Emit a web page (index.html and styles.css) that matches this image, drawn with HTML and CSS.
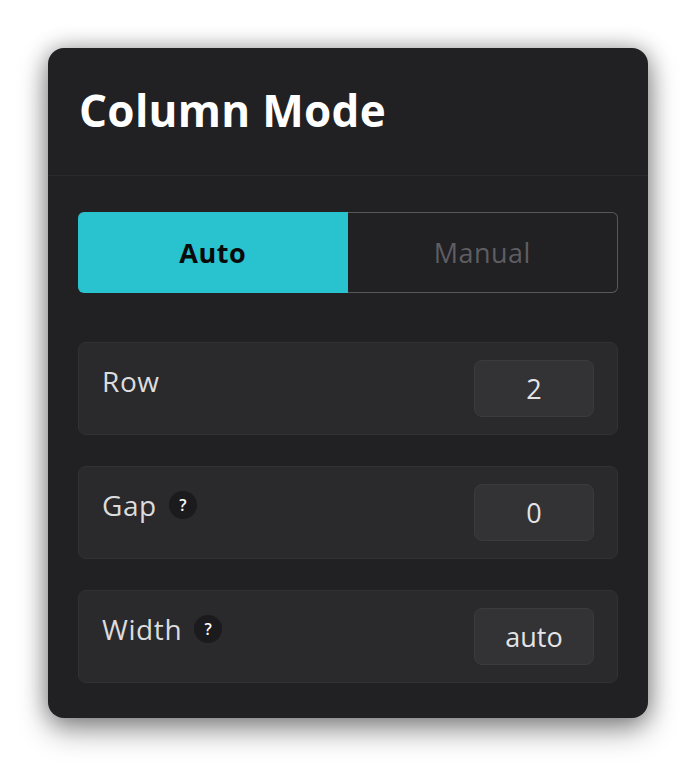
FILE: index.html
```html
<!DOCTYPE html>
<html lang="en">
<head>
<meta charset="utf-8">
<title>Column Mode</title>
<link rel="stylesheet" href="styles.css">
</head>
<body>
<div class="stage">
  <section class="panel">
    <header class="panel-header">
      <h1 class="panel-title">Column Mode</h1>
    </header>
    <div class="panel-body">
      <div class="segmented">
        <button class="seg seg-active" type="button">Auto</button>
        <button class="seg seg-inactive" type="button">Manual</button>
      </div>
      <div class="rows">
        <div class="field-row">
          <div class="field-label">Row</div>
          <div class="field-input">2</div>
        </div>
        <div class="field-row">
          <div class="field-label">Gap <span class="help">?</span></div>
          <div class="field-input">0</div>
        </div>
        <div class="field-row">
          <div class="field-label">Width <span class="help">?</span></div>
          <div class="field-input">auto</div>
        </div>
      </div>
    </div>
  </section>
</div>
</body>
</html>
```
FILE: styles.css
```css
* { box-sizing: border-box; }

html, body {
  margin: 0;
  background: #ffffff;
}

body {
  padding: 48px;
  font-family: "Open Sans", "Noto Sans", sans-serif;
}

.stage {
  position: relative;
  width: 600px;
}

.stage::before {
  content: "";
  position: absolute;
  left: 0;
  top: 0;
  width: 600px;
  height: 24px;
  background: #ffffff;
}

.panel {
  position: relative;
  width: 600px;
  height: 670px;
  background: #212023;
  border-radius: 16px;
  box-shadow: 0 0 22px rgba(0, 0, 0, 0.3), 0 12px 30px rgba(0, 0, 0, 0.4);
  display: flex;
  flex-direction: column;
}

.panel-header {
  height: 128px;
  border-bottom: 1px solid #2b2a2d;
  padding: 34px 31px 0;
}

.panel-title {
  margin: 0;
  color: #ffffff;
  font-size: 44px;
  font-weight: 700;
  line-height: 56px;
  letter-spacing: 0.3px;
}

.panel-body {
  padding: 36px 30px 0;
}

.segmented {
  display: flex;
  height: 81px;
}

.seg {
  flex: 1;
  margin: 0;
  font-family: inherit;
  font-size: 27px;
  letter-spacing: 0.5px;
  cursor: pointer;
  border: none;
}

.seg-active {
  background: #29c2cf;
  color: #0a0a0a;
  font-weight: 700;
  border-radius: 6px 0 0 6px;
}

.seg-inactive {
  background: transparent;
  color: #5e5d62;
  border: 1px solid #58575c;
  border-left: none;
  border-radius: 0 6px 6px 0;
}

.rows {
  margin-top: 49px;
  display: flex;
  flex-direction: column;
  gap: 31px;
}

.field-row {
  height: 93px;
  background: #2a292c;
  border: 1px solid #323135;
  border-radius: 8px;
  padding: 17px 23px;
  display: flex;
  justify-content: space-between;
  align-items: flex-start;
}

.field-label {
  margin-top: 5px;
  color: #dcdcde;
  font-size: 28px;
  line-height: 32px;
  letter-spacing: 0.6px;
  display: flex;
  align-items: center;
}

.help {
  margin-left: 12px;
  width: 28px;
  height: 28px;
  border-radius: 50%;
  background: #1b1a1d;
  color: #ffffff;
  font-size: 16px;
  font-weight: 600;
  letter-spacing: 0;
  display: inline-flex;
  align-items: center;
  justify-content: center;
}

.field-input {
  width: 120px;
  height: 57px;
  background: #333235;
  border: 1px solid #3b3a3e;
  border-radius: 8px;
  color: #e4e4e6;
  font-size: 27px;
  display: flex;
  align-items: center;
  justify-content: center;
}
```
